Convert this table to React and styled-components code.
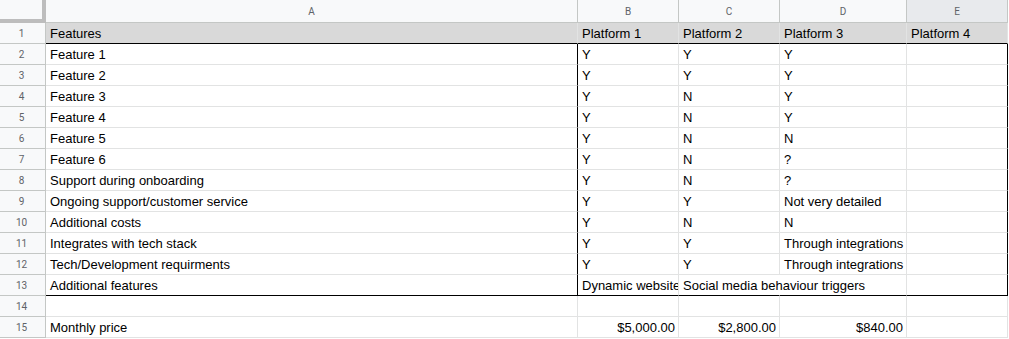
import React from "react";
import styled, { createGlobalStyle } from "styled-components";

const GlobalStyle = createGlobalStyle`
  html, body {
    margin: 0;
    padding: 0;
    background: #ffffff;
  }
  body {
    font-family: "Liberation Sans", Arial, sans-serif;
  }
`;

const GRID = "#e2e3e3";
const HEAD_LINE = "#c4c7c5";
const INK = "#000000";

const columns = ["A", "B", "C", "D", "E"];

const rows = [
  ["Features", "Platform 1", "Platform 2", "Platform 3", "Platform 4"],
  ["Feature 1", "Y", "Y", "Y", ""],
  ["Feature 2", "Y", "Y", "Y", ""],
  ["Feature 3", "Y", "N", "Y", ""],
  ["Feature 4", "Y", "N", "Y", ""],
  ["Feature 5", "Y", "N", "N", ""],
  ["Feature 6", "Y", "N", "?", ""],
  ["Support during onboarding", "Y", "N", "?", ""],
  ["Ongoing support/customer service", "Y", "Y", "Not very detailed", ""],
  ["Additional costs", "Y", "N", "N", ""],
  ["Integrates with tech stack", "Y", "Y", "Through integrations", ""],
  ["Tech/Development requirments", "Y", "Y", "Through integrations", ""],
  ["Additional features", "Dynamic website", "Social media behaviour triggers", "", ""],
  ["", "", "", "", ""],
  ["Monthly price", "$5,000.00", "$2,800.00", "$840.00", ""],
];

const Sheet = styled.div`
  display: grid;
  grid-template-columns: 46px 532px 101px 101px 127px 101px;
  grid-template-rows: 23px repeat(15, 21px);
  width: 1008px;
`;

const Corner = styled.div`
  box-sizing: border-box;
  background: #f8f9fa;
  border-right: 4px solid #bdbdbd;
  border-bottom: 4px solid #bdbdbd;
`;

const ColHeader = styled.div`
  box-sizing: border-box;
  display: flex;
  align-items: center;
  justify-content: center;
  padding-top: 1px;
  background: ${(p) => (p.$active ? "#e8eaed" : "#f8f9fa")};
  border-right: 1px solid ${HEAD_LINE};
  border-bottom: 1px solid ${HEAD_LINE};
  color: #5f6368;
  font-family: Roboto, "Liberation Sans", sans-serif;
  font-size: 10px;
`;

const RowHeader = styled.div`
  box-sizing: border-box;
  display: flex;
  align-items: center;
  justify-content: center;
  padding-right: 2px;
  background: #f8f9fa;
  border-right: 1px solid ${HEAD_LINE};
  border-bottom: 1px solid ${HEAD_LINE};
  color: #5f6368;
  font-family: Roboto, "Liberation Sans", sans-serif;
  font-size: 10px;
`;

const Cell = styled.div`
  box-sizing: border-box;
  position: relative;
  padding: 1px 3px 0 4px;
  line-height: 19px;
  font-size: 13px;
  color: #000;
  white-space: nowrap;
  text-align: ${(p) => p.$align || "left"};
  overflow: ${(p) => (p.$spill ? "visible" : "hidden")};
  z-index: ${(p) => (p.$spill ? 1 : 0)};
  background: ${(p) => p.$bg || "transparent"};
  border-right: 1px solid ${(p) => p.$right || GRID};
  border-bottom: 1px solid ${(p) => p.$bottom || GRID};
`;

const isMoney = (v) => v.startsWith("$");

export default function App() {
  return (
    <>
      <GlobalStyle />
      <Sheet>
        <Corner />
        {columns.map((c) => (
          <ColHeader key={c} $active={c === "E"}>
            {c}
          </ColHeader>
        ))}
        {rows.map((row, r) => {
          const n = r + 1;
          const boxed = n >= 2 && n <= 13;
          return (
            <React.Fragment key={n}>
              <RowHeader>{n}</RowHeader>
              {row.map((v, c) => {
                let bottom;
                let right;
                if (n === 1 || n === 13) bottom = INK;
                if (boxed && (c === 0 || c === 4)) right = INK;
                if (n === 13 && c === 2) right = "transparent";
                return (
                  <Cell
                    key={c}
                    $bg={n === 1 ? "#d9d9d9" : undefined}
                    $align={isMoney(v) ? "right" : "left"}
                    $spill={n === 13 && c === 2}
                    $bottom={bottom}
                    $right={right}
                  >
                    {v}
                  </Cell>
                );
              })}
            </React.Fragment>
          );
        })}
      </Sheet>
    </>
  );
}
